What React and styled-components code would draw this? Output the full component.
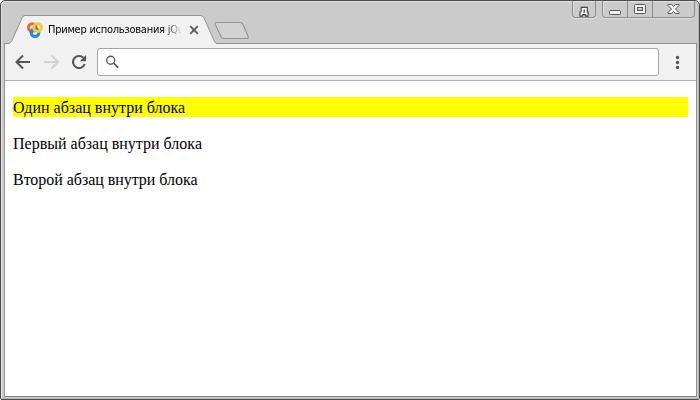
import React from "react";
import styled, { createGlobalStyle } from "styled-components";

const GlobalStyle = createGlobalStyle`
  * { box-sizing: border-box; }
  body { margin: 0; background: #fff; }
`;

const BrowserWindow = styled.div`
  width: 700px;
  height: 400px;
  display: flex;
  flex-direction: column;
  background: #cbcbcb;
  border: 1px solid #4f4b4d;
  border-radius: 5px 5px 2px 2px;
  box-shadow: inset 1px 1px 0 #e2e2e2, inset -1px -1px 0 #b5b5b5;
  padding: 0 2px 2px 3px;
  overflow: hidden;
`;

const TabStrip = styled.header`
  display: flex;
  align-items: flex-start;
  height: 42px;
  flex: none;
`;

const Tab = styled.div`
  position: relative;
  display: flex;
  align-items: center;
  width: 213px;
  height: 29px;
  margin-top: 14px;
  padding-left: 23px;
`;

const TabShape = styled.svg`
  position: absolute;
  left: 0;
  top: 0;
`;

const Favicon = styled.svg`
  position: relative;
  flex: none;
`;

const TabTitle = styled.span`
  position: relative;
  width: 134px;
  margin-left: 5px;
  overflow: hidden;
  white-space: nowrap;
  font: 11px/14px "DejaVu Sans Condensed", "Liberation Sans", sans-serif;
  letter-spacing: -0.25px;
  color: #000;
  mask-image: linear-gradient(to right, #000 116px, transparent 134px);
`;

const CloseTab = styled.svg`
  position: relative;
  margin-left: 7px;
`;

const NewTab = styled.svg`
  margin: 20px 0 0 -4px;
`;

const WindowControls = styled.div`
  display: flex;
  gap: 6px;
  margin-left: auto;
  margin-right: 2px;
`;

const ControlGroup = styled.div`
  display: flex;
  height: 17px;
  border: 1px solid #8d8d8d;
  border-top: 0;
  border-radius: 0 0 4px 4px;
  box-shadow: 0 1px 0 #dedede, inset 1px 0 0 #dedede;
`;

const ControlButton = styled.button`
  display: flex;
  align-items: center;
  justify-content: center;
  width: ${(p) => p.$width}px;
  padding: 0;
  border: 0;
  border-left: ${(p) => (p.$divided ? "1px solid #8d8d8d" : "0")};
  background: transparent;
`;

const ProfileLetter = styled.span`
  font: bold 10px/12px "DejaVu Sans", sans-serif;
  color: #fff;
  margin-top: 4px;
  -webkit-text-stroke: 2.4px #444;
  paint-order: stroke fill;
  will-change: transform;
`;

const Page = styled.main`
  flex: 1;
  display: flex;
  flex-direction: column;
  border: 1px solid #8f8f8f;
  border-left-color: #969696;
  border-bottom-color: #848484;
  background: #fff;
`;

const Toolbar = styled.nav`
  display: flex;
  align-items: center;
  height: 37px;
  flex: none;
  padding: 0 8px;
  background: #f1f1f1;
  border-bottom: 1px solid #b3b3b3;
`;

const NavIcon = styled.svg`
  flex: none;
  margin-right: ${(p) => p.$gap}px;
`;

const AddressBar = styled.div`
  display: flex;
  align-items: center;
  width: 562px;
  height: 28px;
  padding-left: 8px;
  border: 1px solid #a6a6a6;
  border-radius: 3px;
  background: #fff;
`;

const MenuDots = styled.svg`
  margin-left: auto;
`;

const Content = styled.section`
  padding: 16px 8px 0;
`;

const Paragraph = styled.p`
  margin: 0 0 16px;
  height: 20px;
  font: 16px/21px "Liberation Serif", serif;
  letter-spacing: ${(p) => p.$tracking}px;
  white-space: nowrap;
  color: #000;
  background: ${(p) => (p.$highlighted ? "#ffff00" : "transparent")};
`;

const paragraphs = [
  { text: "Один абзац внутри блока", highlighted: true, tracking: 0 },
  { text: "Первый абзац внутри блока", tracking: 0 },
  { text: "Второй абзац внутри блока", tracking: -0.04 },
];

export default function App() {
  return (
    <>
      <GlobalStyle />
      <BrowserWindow>
        <TabStrip>
          <Tab>
            <TabShape width="213" height="29" viewBox="0 0 213 29">
              <path d="M0 29V28.5H4Q6.5 28.5 7.5 26.5L18 3Q19 .5 21 .5H197Q199 .5 200 3L210.5 26.5Q211.5 28.5 213 28.5V29Z" fill="#f1f1f1" />
              <path d="M0 28.5H4Q6.5 28.5 7.5 26.5L18 3Q19 .5 21 .5H197Q199 .5 200 3L210.5 26.5Q211.5 28.5 213 28.5" fill="none" stroke="#929292" />
            </TabShape>
            <Favicon width="16" height="16" viewBox="0 0 16 16" fill="none" strokeWidth="3">
              <circle cx="5.3" cy="5.5" r="3.8" stroke="#f26334" />
              <circle cx="8" cy="10.6" r="3.9" stroke="#1792cf" />
              <circle cx="10.6" cy="5.5" r="3.9" stroke="#fbcb35" />
            </Favicon>
            <TabTitle>Пример использования jQuery</TabTitle>
            <CloseTab width="10" height="10" viewBox="0 0 10 10">
              <path d="M1.2 1.2L8.8 8.8M8.8 1.2L1.2 8.8" stroke="#5c5c5c" strokeWidth="1.9" />
            </CloseTab>
          </Tab>
          <NewTab width="38" height="20" viewBox="0 0 38 20">
            <path d="M3.5 1.5H27Q29 1.5 30 3.5L35 15Q36 17.5 33.5 17.5H11Q9 17.5 8 15.5L2.5 4Q1.5 1.5 3.5 1.5Z" fill="#d2d2d2" stroke="#969696" strokeWidth="1.2" />
          </NewTab>
          <WindowControls>
            <ControlGroup>
              <ControlButton $width={22} aria-label="Профиль"><ProfileLetter>д</ProfileLetter></ControlButton>
            </ControlGroup>
            <ControlGroup>
              <ControlButton $width={24} aria-label="Свернуть">
                <svg width="13" height="16" viewBox="0 0 13 16"><rect x=".5" y="9.5" width="11" height="4" rx="1" fill="#f3f3f3" stroke="#555" /></svg>
              </ControlButton>
              <ControlButton $width={25} $divided aria-label="Развернуть">
                <svg width="13" height="16" viewBox="0 0 13 16"><rect x=".5" y="3.5" width="11" height="9" rx="1" fill="#f3f3f3" stroke="#555" /><rect x="3.5" y="6.5" width="5" height="3" fill="#cbcbcb" stroke="#555" /></svg>
              </ControlButton>
              <ControlButton $width={42} $divided aria-label="Закрыть">
                <svg width="13" height="16" viewBox="0 0 13 16"><path d="M1 3.5H4.5L6.5 5.5L8.5 3.5H12V4.5L8.5 8L12 11.5V12.5H8.5L6.5 10.5L4.5 12.5H1V11.5L4.5 8L1 4.5Z" fill="#f3f3f3" stroke="#555" /></svg>
              </ControlButton>
            </ControlGroup>
          </WindowControls>
        </TabStrip>
        <Page>
          <Toolbar>
            <NavIcon $gap={11} width="20" height="20" viewBox="0 0 20 20" fill="none" stroke="#555" strokeWidth="2"><path d="M17 10H4M10 3.5L3.5 10L10 16.5" /></NavIcon>
            <NavIcon $gap={8} width="20" height="20" viewBox="0 0 20 20" fill="none" stroke="#d2d2d2" strokeWidth="2"><path d="M0 10H13M7.5 3.5L14 10L7.5 16.5" /></NavIcon>
            <NavIcon $gap={9} width="16" height="20" viewBox="0 0 16 20"><path d="M11.3 5.8A6 6 0 1 0 12.7 12" fill="none" stroke="#555" strokeWidth="2.1" /><path d="M14 3V9.2H7.8Z" fill="#555" /></NavIcon>
            <AddressBar>
              <svg width="14" height="14" viewBox="0 0 14 14" fill="none" stroke="#5b5b5b"><circle cx="4.7" cy="5.2" r="4" strokeWidth="1.4" /><path d="M7.6 8.1L12.2 12.7" strokeWidth="1.8" /></svg>
            </AddressBar>
            <MenuDots width="20" height="20" viewBox="0 0 20 20" fill="#555"><circle cx="9.5" cy="5.5" r="1.7" /><circle cx="9.5" cy="10.5" r="1.7" /><circle cx="9.5" cy="15.5" r="1.7" /></MenuDots>
          </Toolbar>
          <Content>
            {paragraphs.map(({ text, highlighted, tracking }) => (
              <Paragraph key={text} $highlighted={highlighted} $tracking={tracking}>{text}</Paragraph>
            ))}
          </Content>
        </Page>
      </BrowserWindow>
    </>
  );
}
